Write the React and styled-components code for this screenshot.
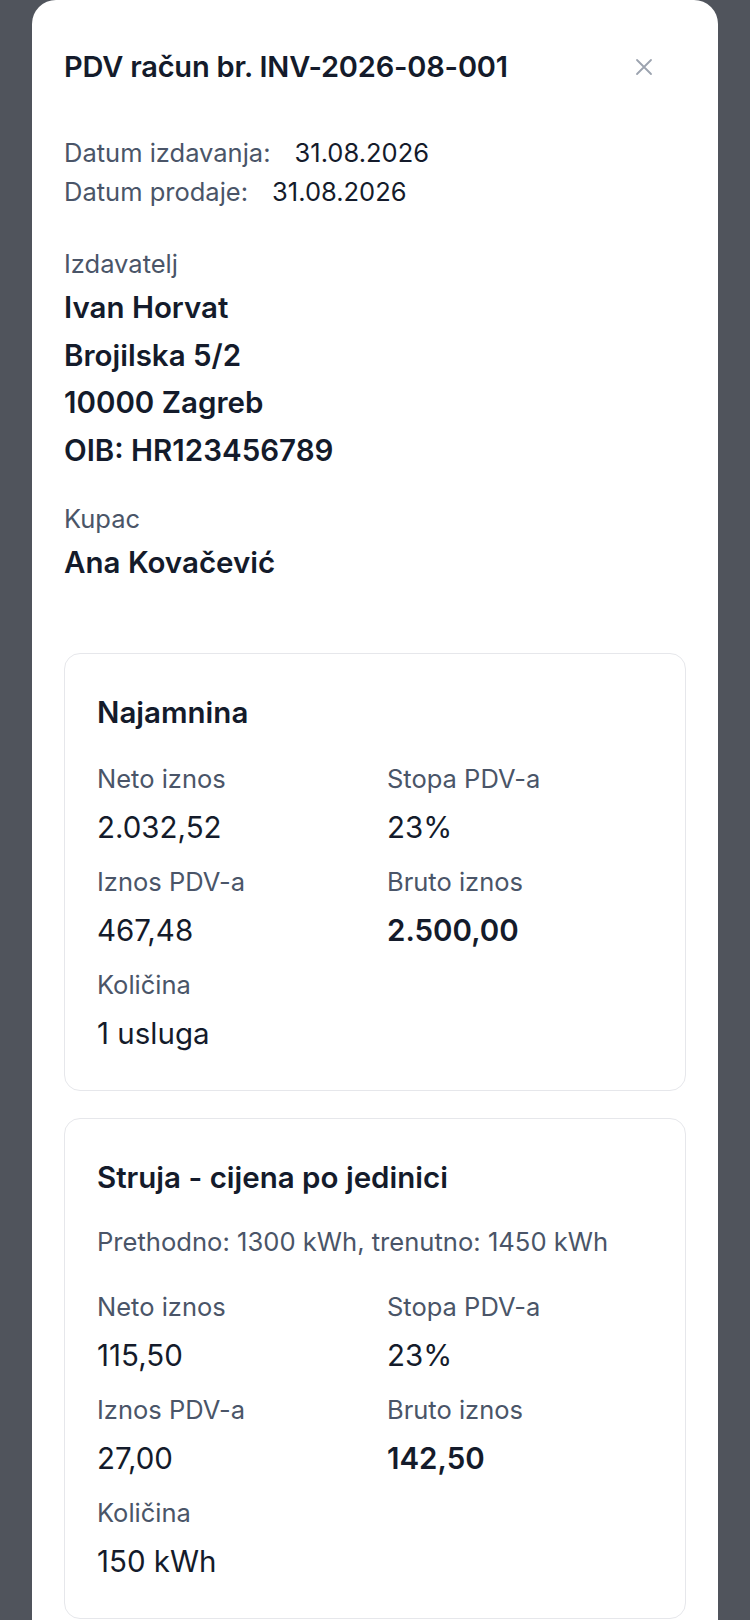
import React from 'react'
import styled, { createGlobalStyle } from 'styled-components'

const GlobalStyle = createGlobalStyle`
  html, body {
    margin: 0;
    padding: 0;
    background: #50545c;
  }
  body {
    font-family: Inter, "Noto Sans", sans-serif;
    color: #141b2b;
  }
`

const Overlay = styled.div`
  min-height: 1620px;
  padding: 0 32px;
  background: #50545c;
`

const Modal = styled.div`
  background: #ffffff;
  border-radius: 24px 24px 0 0;
  padding: 47px 32px 60px;
  min-height: 1560px;
`

const Header = styled.div`
  display: flex;
  align-items: center;
  justify-content: space-between;
`

const Title = styled.h2`
  margin: 0;
  font-size: 29px;
  line-height: 36px;
  font-weight: 600;
  letter-spacing: -0.2px;
  color: #141b2b;
`

const CloseButton = styled.button`
  width: 40px;
  height: 40px;
  margin-right: 22px;
  border: 0;
  padding: 0;
  background: transparent;
  display: flex;
  align-items: center;
  justify-content: center;
  cursor: pointer;
`

const Dates = styled.div`
  margin-top: 46px;
`

const DateRow = styled.div`
  font-size: 25.5px;
  line-height: 39px;
`

const Label = styled.span`
  color: #4a5568;
  margin-right: ${p => p.$gap || 0}px;
`

const Value = styled.span`
  color: #141b2b;
`

const Party = styled.div`
  margin-top: ${p => p.$top}px;
`

const PartyLabel = styled.div`
  font-size: 25.5px;
  line-height: 40px;
  color: #4a5568;
`

const PartyLine = styled.div`
  font-size: 29.5px;
  line-height: 47.5px;
  font-weight: 600;
  color: #141b2b;
`

const Items = styled.div`
  margin-top: 66px;
  display: flex;
  flex-direction: column;
  gap: 27px;
`

const ItemCard = styled.div`
  border: 1px solid #e6e7eb;
  border-radius: 16px;
  padding: 40px 32px 37px;
`

const ItemTitle = styled.h3`
  margin: 0;
  font-size: 29.5px;
  line-height: 36px;
  font-weight: 600;
  color: #141b2b;
`

const ItemNote = styled.div`
  margin-top: 31px;
  font-size: 25.6px;
  line-height: 32px;
  color: #4a5568;
`

const Grid = styled.div`
  margin-top: 33px;
  display: grid;
  grid-template-columns: 1fr 1fr;
  column-gap: 24px;
  row-gap: 19px;
`

const Field = styled.div`
  display: flex;
  flex-direction: column;
  gap: 12px;
`

const FieldLabel = styled.div`
  font-size: 25.5px;
  line-height: 32px;
  color: #4a5568;
`

const FieldValue = styled.div`
  font-size: 29.5px;
  line-height: 40px;
  font-weight: ${p => (p.$strong ? 600 : 400)};
  color: #141b2b;
`

const CloseIcon = () => (
  <svg width="18" height="18" viewBox="0 0 18 18" fill="none">
    <path d="M2 2L16 16M16 2L2 16" stroke="#9ca3af" strokeWidth="1.8" strokeLinecap="round" />
  </svg>
)

const items = [
  {
    title: 'Najamnina',
    net: '2.032,52',
    rate: '23%',
    vat: '467,48',
    gross: '2.500,00',
    qty: '1 usluga',
  },
  {
    title: 'Struja - cijena po jedinici',
    note: 'Prethodno: 1300 kWh, trenutno: 1450 kWh',
    net: '115,50',
    rate: '23%',
    vat: '27,00',
    gross: '142,50',
    qty: '150 kWh',
  },
]

const InvoiceItem = ({ item }) => (
  <ItemCard>
    <ItemTitle>{item.title}</ItemTitle>
    {item.note && <ItemNote>{item.note}</ItemNote>}
    <Grid>
      <Field>
        <FieldLabel>Neto iznos</FieldLabel>
        <FieldValue>{item.net}</FieldValue>
      </Field>
      <Field>
        <FieldLabel>Stopa PDV-a</FieldLabel>
        <FieldValue>{item.rate}</FieldValue>
      </Field>
      <Field>
        <FieldLabel>Iznos PDV-a</FieldLabel>
        <FieldValue>{item.vat}</FieldValue>
      </Field>
      <Field>
        <FieldLabel>Bruto iznos</FieldLabel>
        <FieldValue $strong>{item.gross}</FieldValue>
      </Field>
      <Field>
        <FieldLabel>Količina</FieldLabel>
        <FieldValue>{item.qty}</FieldValue>
      </Field>
    </Grid>
  </ItemCard>
)

export default function App() {
  return (
    <>
      <GlobalStyle />
      <Overlay>
        <Modal>
          <Header>
            <Title>PDV račun br. INV-2026-08-001</Title>
            <CloseButton aria-label="Zatvori">
              <CloseIcon />
            </CloseButton>
          </Header>

          <Dates>
            <DateRow>
              <Label $gap={24}>Datum izdavanja:</Label>
              <Value>31.08.2026</Value>
            </DateRow>
            <DateRow>
              <Label $gap={24}>Datum prodaje:</Label>
              <Value>31.08.2026</Value>
            </DateRow>
          </Dates>

          <Party $top={33}>
            <PartyLabel>Izdavatelj</PartyLabel>
            <PartyLine>Ivan Horvat</PartyLine>
            <PartyLine>Brojilska 5/2</PartyLine>
            <PartyLine>10000 Zagreb</PartyLine>
            <PartyLine>OIB: HR123456789</PartyLine>
          </Party>

          <Party $top={25}>
            <PartyLabel>Kupac</PartyLabel>
            <PartyLine>Ana Kovačević</PartyLine>
          </Party>

          <Items>
            {items.map(item => (
              <InvoiceItem key={item.title} item={item} />
            ))}
          </Items>
        </Modal>
      </Overlay>
    </>
  )
}
